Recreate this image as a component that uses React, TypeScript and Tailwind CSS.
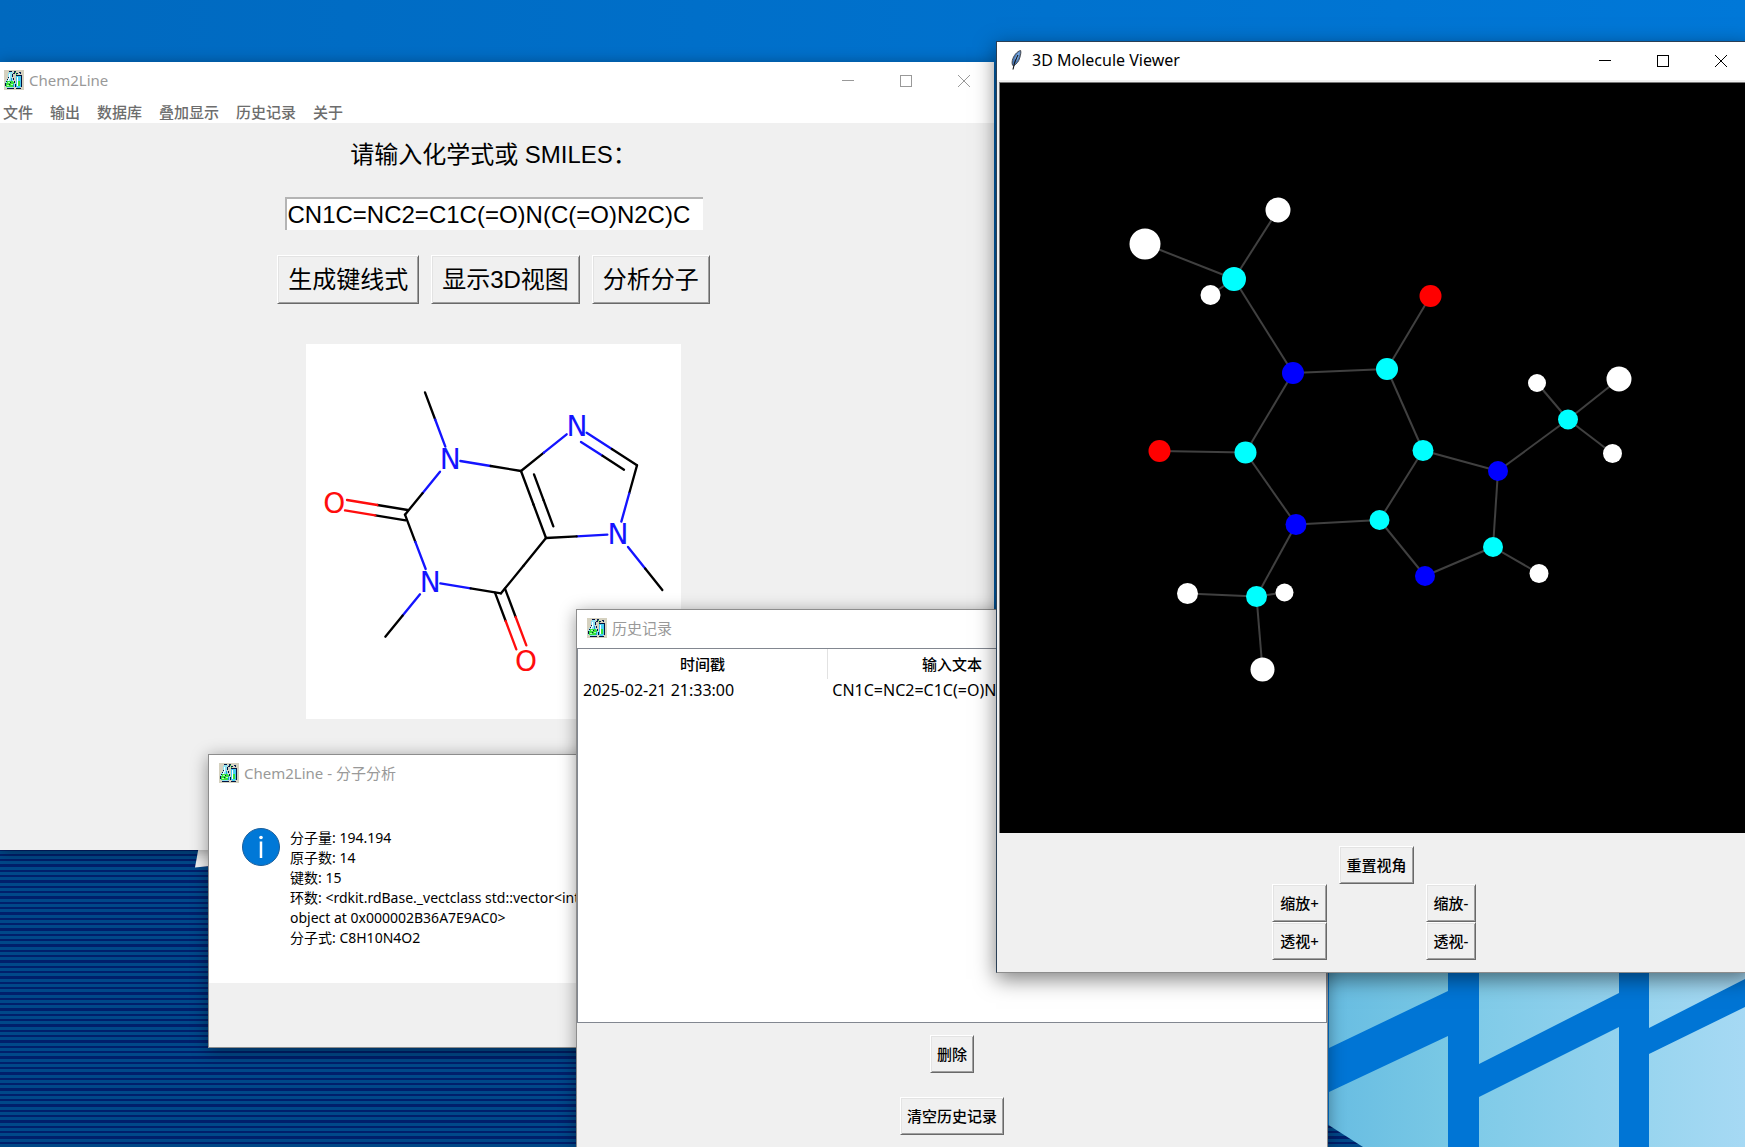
import type { ButtonHTMLAttributes, ReactNode } from "react";

const UI = "font-['Noto_Sans','Noto_Sans_CJK_SC',sans-serif]";
const FORM = "font-['Liberation_Sans','Noto_Sans_CJK_SC',sans-serif]";

function AppIcon() {
  return (
    <svg viewBox="0 0 20 20" className="size-5 shrink-0" shapeRendering="crispEdges" aria-hidden="true">
      <rect width="20" height="20" fill="#d5d1bf" />
      <path d="M5 2h4v1H8v5l3 5v4H9v1H3v-1H1v-4l3-5V3H5z" fill="#8fe4f4" />
      <path d="M5 4h1v5H5zM4 9h1v2H4z" fill="#fff" />
      <path d="M3 11h6v1h1v5H2v-4h1z" fill="#35e03a" />
      <path d="M4 12h2v1H4zM7 14h2v1H7zM3 15h2v1H3z" fill="#b6ffb0" />
      <path d="M5 1h3v1H5zM8 4h1v3H8zM9 8h1v2H9zM10 11h1v2h-1zM4 7h1v1H4zM3 9h1v1H3zM2 11h1v1H2zM1 13h1v3H1zM3 18h7v1H3zM6 12h1v1H6zM5 14h1v1H5z" fill="#03133f" />
      <path d="M9 14h1v3H9zM7 8h1v3H7z" fill="#1e9ad6" />
      <path d="M12 6h5v11h-1v1h-3v-1h-1z" fill="#46cdf2" />
      <path d="M13 7h1v9h-1z" fill="#fff" />
      <path d="M14 11h2v5h-2z" fill="#35e03a" />
      <path d="M12 5h6v1h-6zM17 6h1v11h-1zM12 18h5v1h-5zM11 14h1v3h-1z" fill="#03133f" />
      <path d="M9 3h2v1H9zM10 1h2v2h-2zM15 2h2v1h-2zM16 3h1v1h-1zM12 3h2v1h-2z" fill="#06224f" />
      <path d="M11 2h1v1h-1zM12 4h1v1h-1z" fill="#2fd53c" />
    </svg>
  );
}

function FeatherIcon() {
  return (
    <svg viewBox="0 0 20 20" className="size-5 shrink-0" aria-hidden="true">
      <path d="M13.6.4C10 1.500 6.500 5.500 5.300 10.500c-.4 2-.3 3.300.2 4.700l1.200.6c3-1.800 5-4.300 6-7.800.8-3 1.600-5.500.9-7.600z" fill="#4a7ab8" stroke="#4a4d52" strokeWidth="1" />
      <path d="M12.800 1.500C10.500 3 8.500 6 7.400 9.600L9 9l-1 3 2.500-2c1.300-2.700 2.300-5.900 2.300-8.500z" fill="#7aa8de" />
      <path d="M11 5C9 8.500 7.300 12 6 19.500" fill="none" stroke="#17191d" strokeWidth="1.200" />
    </svg>
  );
}

function Caption({ tone }: { tone: string }) {
  const cell = "flex h-full w-[58px] items-center justify-center";
  return (
    <div className={`flex h-full pr-px ${tone}`}>
      <button type="button" aria-label="最小化" className={cell}>
        <svg viewBox="0 0 12 12" className="size-3" shapeRendering="crispEdges"><path d="M0 5.500h12" stroke="currentColor" /></svg>
      </button>
      <button type="button" aria-label="最大化" className={cell}>
        <svg viewBox="0 0 12 12" className="size-3" shapeRendering="crispEdges"><path d="M.5.5h11v11H.5z" fill="none" stroke="currentColor" /></svg>
      </button>
      <button type="button" aria-label="关闭" className={cell}>
        <svg viewBox="0 0 12 12" className="size-3"><path d="M0 0l12 12M12 0L0 12" stroke="currentColor" /></svg>
      </button>
    </div>
  );
}

function TitleBar({ icon, title, tone, pad, children }: { icon: ReactNode; title: string; tone: string; pad: string; children?: ReactNode }) {
  return (
    <header className={`flex h-[38px] shrink-0 items-center justify-between bg-white ${pad}`}>
      <div className="flex items-center gap-[5px] pb-0.5">
        {icon}
        <h2 className={`leading-5 whitespace-nowrap ${tone}`}>{title}</h2>
      </div>
      {children}
    </header>
  );
}

function RaisedButton({ className = "", ...rest }: ButtonHTMLAttributes<HTMLButtonElement>) {
  return (
    <button
      type="button"
      className={`border border-t-white border-r-[#696969] border-b-[#696969] border-l-white bg-[#f0f0f0] whitespace-nowrap text-black shadow-[inset_1px_1px_0_#e3e3e3,inset_-1px_-1px_0_#a0a0a0] ${className}`}
      {...rest}
    />
  );
}

function Wallpaper() {
  return (
    <svg viewBox="0 0 1745 1147" preserveAspectRatio="xMinYMin slice" className="absolute inset-0 h-full w-full" aria-hidden="true">
      <defs>
        <linearGradient id="sky" x1="0" x2="1"><stop offset="0" stopColor="#0069bf" /><stop offset="1" stopColor="#0078d8" /></linearGradient>
        <linearGradient id="glassA" x1="0" x2="1"><stop offset="0" stopColor="#68bde2" /><stop offset="1" stopColor="#79c8e5" /></linearGradient>
        <linearGradient id="glassB" x1="0" x2="1"><stop offset="0" stopColor="#80cbe8" /><stop offset="1" stopColor="#93d2ee" /></linearGradient>
        <linearGradient id="glassC" x1="0" x2="1"><stop offset="0" stopColor="#99d5ef" /><stop offset="1" stopColor="#a6d9f4" /></linearGradient>
        <pattern id="stripes" width="16" height="16" y="849" patternUnits="userSpaceOnUse">
          <rect width="16" height="16" fill="#001f6b" />
          <rect y="2" width="16" height="3" fill="#004889" />
          <rect y="7" width="16" height="3" fill="#004889" />
          <rect y="12" width="16" height="3" fill="#004889" />
        </pattern>
      </defs>
      <rect width="1745" height="850" fill="url(#sky)" />
      <rect y="840" width="1327" height="307" fill="url(#stripes)" />
      <path d="M200 840h30v24l-35 3.500z" fill="#f5f5f5" />
      <rect x="1320" y="840" width="425" height="307" fill="#0075d5" />
      <path d="M1329 900h119v91l-119 57zM1329 1092l119-56v111h-119z" fill="url(#glassA)" />
      <path d="M1479 900h140v93l-140 71zM1479 1097l140-70v120h-140z" fill="url(#glassB)" />
      <path d="M1649 900h96v79l-96 49zM1649 1054l96-47v140h-96z" fill="url(#glassC)" />
      <path d="M1327 1124l36 23h-36z" fill="url(#stripes)" />
    </svg>
  );
}

type Bond2D = [number, number, number, number, string, string];
const BLACK = "#000";
const BLUE = "#1414ff";
const RED = "#ff0d0d";

const bonds2D: Bond2D[] = [
  [406, 186, 467, 349, BLACK, BLUE],
  [512, 392, 694, 422, BLUE, BLACK],
  [451, 424, 346, 553, BLUE, BLACK],
  [354, 539, 172, 509, BLACK, RED],
  [348, 570, 166, 540, BLACK, RED],
  [346, 553, 408, 716, BLACK, BLUE],
  [391, 792, 287, 919, BLUE, BLACK],
  [452, 759, 634, 789, BLUE, BLACK],
  [646, 775, 710, 945, BLACK, RED],
  [616, 787, 680, 957, BLACK, RED],
  [634, 789, 769, 623, BLACK, BLACK],
  [769, 623, 694, 422, BLACK, BLACK],
  [791, 588, 733, 432, BLACK, BLACK],
  [694, 422, 831, 312, BLACK, BLUE],
  [891, 307, 1042, 405, BLUE, BLACK],
  [874, 335, 1003, 418, BLUE, BLACK],
  [1042, 405, 995, 574, BLACK, BLUE],
  [953, 613, 769, 623, BLUE, BLACK],
  [1015, 650, 1118, 779, BLUE, BLACK],
];

const labels2D: [number, number, string, string][] = [
  [482, 417, "N", BLUE],
  [862, 318, "N", BLUE],
  [985, 642, "N", BLUE],
  [422, 784, "N", BLUE],
  [134, 549, "O", RED],
  [709, 1021, "O", RED],
];

function StructureFormula() {
  return (
    <svg viewBox="49 41 1125 1125" className="mx-auto mt-10 block size-[375px] bg-white" role="img" aria-label="键线式">
      <g strokeWidth="7" strokeLinecap="round">
        {bonds2D.map(([x1, y1, x2, y2, a, b], i) => {
          const mx = (x1 + x2) / 2;
          const my = (y1 + y2) / 2;
          return (
            <g key={i}>
              <line x1={x1} y1={y1} x2={mx} y2={my} stroke={a} />
              <line x1={mx} y1={my} x2={x2} y2={y2} stroke={b} />
            </g>
          );
        })}
      </g>
      <g fontSize="84" textAnchor="middle" className="font-['DejaVu_Sans',sans-serif]">
        {labels2D.map(([x, y, t, c], i) => (
          <text key={i} x={x} y={y} fill={c}>{t}</text>
        ))}
      </g>
    </svg>
  );
}

const H = "#fff";
const C = "#0ff";
const N = "#00f";
const O = "#f00";

const atoms3D: [number, number, number, string][] = [
  [278, 127, 12.5, H], [145, 161, 15.5, H], [234, 196, 12, C], [210.5, 212, 10, H], [430.5, 213, 11, O],
  [293, 290, 11, N], [387, 286, 11, C], [537, 300, 9, H], [619, 296, 12.5, H], [568, 336.5, 10, C],
  [159.5, 368, 11, O], [245.5, 369.5, 11, C], [423, 367.5, 10.5, C], [498, 388, 10, N], [612.5, 370.5, 9.5, H],
  [296, 441.5, 10.5, N], [379.5, 437, 10, C], [493, 464, 10, C], [425, 493, 10, N], [539, 490.5, 9.5, H],
  [187.5, 510.5, 10.5, H], [256.5, 513.5, 10.5, C], [284.5, 509.5, 9, H], [262.5, 586.5, 12, H],
];

const bonds3D: [number, number][] = [
  [0, 2], [1, 2], [3, 2], [2, 5], [5, 6], [6, 4], [5, 11], [11, 10], [11, 15], [15, 16], [16, 12], [12, 6],
  [12, 13], [13, 9], [9, 7], [9, 8], [9, 14], [13, 17], [17, 19], [17, 18], [18, 16], [15, 21], [21, 20], [21, 22], [21, 23],
];

function MoleculeCanvas() {
  return (
    <svg viewBox="0 0 750 750" className="block w-full bg-black" role="img" aria-label="3D Molecule">
      {bonds3D.map(([a, b], i) => (
        <line key={i} x1={atoms3D[a][0]} y1={atoms3D[a][1]} x2={atoms3D[b][0]} y2={atoms3D[b][1]} stroke="#404040" strokeWidth="2" />
      ))}
      {atoms3D.map(([x, y, r, c], i) => (
        <circle key={i} cx={x} cy={y} r={r} fill={c} />
      ))}
    </svg>
  );
}

function MainWindow() {
  return (
    <section className="absolute top-[62px] left-0 w-[994px] bg-[#f0f0f0] shadow-[0_2px_14px_rgba(0,0,0,0.4)]">
      <TitleBar icon={<AppIcon />} title="Chem2Line" tone="text-[15px] text-[#999]" pad="pl-1">
        <Caption tone="text-[#999]" />
      </TitleBar>
      <nav className="flex h-[23px] items-center gap-[17px] bg-white pl-[3px] text-[15px] leading-5 font-medium text-[#6d6d6d]">
        {["文件", "输出", "数据库", "叠加显示", "历史记录", "关于"].map((m) => (
          <button key={m} type="button">{m}</button>
        ))}
      </nav>
      <div className={`pt-[14px] pr-[7px] pb-[131px] text-2xl text-black ${FORM}`}>
        <label htmlFor="formula" className="block text-center leading-9">请输入化学式或 SMILES：</label>
        <input
          id="formula"
          defaultValue="CN1C=NC2=C1C(=O)N(C(=O)N2C)C"
          className="mx-auto mt-6 block h-[33px] w-[418px] border-t-2 border-l-2 border-[#b4b4b4] bg-white pl-px leading-7 outline-none"
        />
        <div className="mt-[25px] flex justify-center gap-3">
          {["生成键线式", "显示3D视图", "分析分子"].map((t) => (
            <RaisedButton key={t} className="h-[49px] px-[10px]">{t}</RaisedButton>
          ))}
        </div>
        <StructureFormula />
      </div>
    </section>
  );
}

function AnalysisWindow() {
  return (
    <section className="absolute top-[754px] left-[208px] w-[460px] border border-[#8d8d8d] bg-[#f0f0f0] shadow-[0_3px_16px_rgba(0,0,0,0.4)]">
      <TitleBar icon={<AppIcon />} title="Chem2Line - 分子分析" tone="text-[15px] text-[#999]" pad="pl-[10px]" />
      <div className="flex gap-[10px] bg-white py-[35px] pl-[33px]">
        <svg viewBox="0 0 38 38" className="size-[38px] shrink-0" role="img" aria-label="信息">
          <circle cx="19" cy="19" r="18.500" fill="#0078d7" stroke="#1b5f9c" />
          <circle cx="19" cy="9.500" r="1.800" fill="#fff" />
          <path d="M19 13.500V30" stroke="#fff" strokeWidth="2.500" />
        </svg>
        <div className="text-sm leading-5 whitespace-nowrap text-black">
          <p>分子量: 194.194</p>
          <p>原子数: 14</p>
          <p>键数: 15</p>
          <p>环数: &lt;rdkit.rdBase._vectclass std::vector&lt;int</p>
          <p>object at 0x000002B36A7E9AC0&gt;</p>
          <p>分子式: C8H10N4O2</p>
        </div>
      </div>
      <div className="h-16" />
    </section>
  );
}

function HistoryWindow() {
  return (
    <section className="absolute top-[609px] bottom-0 left-[576px] flex w-[752px] flex-col border border-b-0 border-[#8d8d8d] bg-[#f0f0f0] shadow-[0_3px_16px_rgba(0,0,0,0.4)]">
      <TitleBar icon={<AppIcon />} title="历史记录" tone="text-[15px] text-[#999]" pad="pl-[10px]" />
      <div className="min-h-0 flex-1 border border-[#828790] bg-white">
        <table className="w-full table-fixed border-collapse leading-5 text-black">
          <thead className="text-[15px]">
            <tr className="h-[30px]">
              <th className="border-r border-[#e2e2e2] font-medium">时间戳</th>
              <th className="border-r border-[#e2e2e2] font-medium">输入文本</th>
              <th />
            </tr>
          </thead>
          <tbody className="text-base leading-5">
            <tr className="h-6">
              <td className="pb-0.5 pl-[5px]">2025-02-21 21:33:00</td>
              <td className="pb-0.5 pl-[5px] whitespace-nowrap">CN1C=NC2=C1C(=O)N(C(=O)N2C)C</td>
              <td />
            </tr>
          </tbody>
        </table>
      </div>
      <div className="flex flex-col items-center gap-6 py-3 text-[15px] leading-5 font-medium">
        <RaisedButton className="h-[38px] px-[6px]">删除</RaisedButton>
        <RaisedButton className="h-[38px] px-[6px]">清空历史记录</RaisedButton>
      </div>
    </section>
  );
}

function ViewerWindow() {
  const btn = "h-[38px] px-[6px]";
  return (
    <section className="absolute top-[41px] left-[996px] w-[756px] border border-[#2a3f55] border-b-[#8d8d8d] bg-[#f0f0f0] shadow-[0_6px_20px_rgba(0,0,0,0.5)]">
      <TitleBar icon={<FeatherIcon />} title="3D Molecule Viewer" tone="text-base text-black" pad="pl-[10px]">
        <Caption tone="text-black" />
      </TitleBar>
      <div className="pt-0.5 pr-px pl-0.5">
        <div className="border-t border-l border-[#777]">
          <MoleculeCanvas />
        </div>
      </div>
      <div className="grid grid-cols-[55px_99px_50px] justify-center pt-[13px] pb-3 text-[15px] leading-5 font-medium">
        <RaisedButton className={`${btn} col-start-2 justify-self-center`}>重置视角</RaisedButton>
        <RaisedButton className={`${btn} col-start-1`}>缩放+</RaisedButton>
        <RaisedButton className={`${btn} col-start-3`}>缩放-</RaisedButton>
        <RaisedButton className={`${btn} col-start-1`}>透视+</RaisedButton>
        <RaisedButton className={`${btn} col-start-3`}>透视-</RaisedButton>
      </div>
    </section>
  );
}

export default function App() {
  return (
    <main className={`relative h-screen overflow-hidden bg-[#0075d5] ${UI}`}>
      <Wallpaper />
      <MainWindow />
      <AnalysisWindow />
      <HistoryWindow />
      <ViewerWindow />
    </main>
  );
}
